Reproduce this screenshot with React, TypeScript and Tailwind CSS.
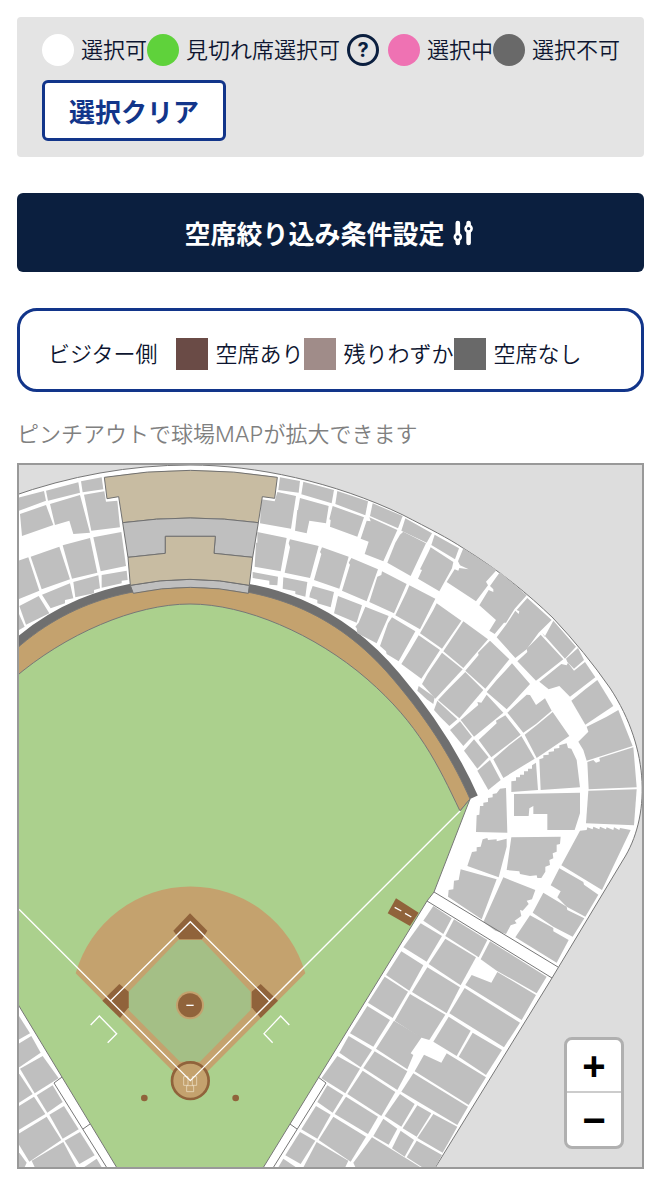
import React, { useState } from 'react';
import clsx from 'clsx';

interface LegendItem {
  label: string;
  color: string;
}

interface Section {
  id: string;
  transform: string;
  blocks: string[];
}

const SEAT_LEGEND: LegendItem[] = [
  { label: '選択可', color: 'bg-white' },
  { label: '見切れ席選択可', color: 'bg-[#5fd23b]' },
  { label: '選択中', color: 'bg-[#ef72b3]' },
  { label: '選択不可', color: 'bg-[#696969]' },
];

const AREA_LEGEND: LegendItem[] = [
  { label: '空席あり', color: 'bg-[#6a4b46]' },
  { label: '残りわずか', color: 'bg-[#a08c89]' },
  { label: '空席なし', color: 'bg-[#696969]' },
];

const INFIELD_BLOCKS = [
  '484,34 550,76 508,152 438,105',
  '434,110 504,155 458,234 384,188',
  '382,198 450,240 400,320 330,280',
  '462,242 545,292 512,340 520,345 502,388 408,326',
  '326,288 396,330 362,382 298,338',
  '404,334 502,394 472,450 370,384',
  '292,348 360,386 316,460 244,415',
  '368,392 466,456 424,528 322,462',
  '520,400 684,500 652,555 484,455',
  '262,436 310,466 278,518 232,486',
  '318,470 414,530 384,582 284,522',
  '480,462 524,492 484,560 434,528',
  '532,496 574,520 530,590 488,565',
  '580,522 652,560 608,638 532,594',
  '228,498 272,524 232,596 184,568',
  '280,530 378,590 332,665 236,600',
  '430,536 472,566 446,614 400,588',
  '482,572 522,600 494,650 456,625',
  '530,602 606,645 582,690 550,684 500,652',
  '180,576 226,602 182,672 136,646',
  '396,592 555,690 350,690 340,668',
  '230,606 325,662 312,690 186,690',
  '130,656 180,690 110,690',
];

// Block outlines are kept at three times the map scale
const SECTIONS: Section[] = [
  {
    id: 'left-field',
    transform: 'translate(10 460) scale(0.33333)',
    blocks: [
      '20,114 102,93 108,122 20,155',
      '108,92 205,67 210,98 114,122',
      '213,64 275,52 280,88 218,97',
      '30,162 108,135 130,195 36,228',
      '120,132 210,105 240,218 190,222 178,182 135,195',
      '222,104 283,94 288,125 322,122 330,202 244,212',
      '20,304 55,292 88,392 20,420',
      '62,290 148,260 180,358 95,388',
      '158,256 240,234 262,338 186,356',
      '250,232 334,216 348,318 272,334',
      '28,438 86,408 118,460 48,494',
      '96,404 180,370 190,415 165,420 165,430 122,445',
      '190,366 265,346 270,385 252,390 252,400 196,412',
      '275,345 350,332 353,360 335,362 335,370 275,383',
      '20,446 44,500 20,514',
    ],
  },
  {
    id: 'center-right',
    transform: 'translate(240 460) scale(0.33333)',
    blocks: [
      '120,52 180,63 176,98 115,90',
      '190,65 282,90 275,130 184,103',
      '292,93 384,124 376,166 286,132',
      '398,130 488,168 474,205 390,168',
      '496,175 576,220 560,248 484,212',
      '584,224 657,265 645,298 574,255',
      '112,96 168,108 153,206 60,190 64,118 104,124',
      '180,114 266,138 258,190 208,182 200,220 165,212 172,150 174,150',
      '278,138 372,172 352,230 270,200 272,180 268,178',
      '388,172 472,210 430,304 374,282 386,245 362,236 380,182 392,184',
      '490,215 558,250 512,348 442,308 466,248 480,224',
      '572,262 640,306 636,325 598,394 534,356 546,330 540,328 566,275',
      '52,216 140,234 122,334 44,320 48,248 52,248',
      '150,238 236,258 210,354 134,338 150,262 146,250',
      '246,262 326,290 298,386 222,360 244,282 240,276',
      '334,294 414,328 380,424 306,392 330,314 326,308',
      '426,334 500,372 462,460 388,426 412,350 424,345',
      '508,376 586,416 540,508 466,466 500,395',
      '38,336 114,350 112,376 88,374 88,362 38,354',
      '130,352 202,366 196,410 166,402 166,394 128,386',
      '218,378 282,396 272,442 232,430 232,420 208,412 210,400',
      '294,408 366,436 350,488 282,460',
      '376,440 446,468 410,550 352,520 350,505 346,500 356,488',
      '456,472 526,514 476,604 440,582 438,574 420,558 444,490',
    ],
  },
  {
    id: 'right-field',
    transform: 'translate(400 500) scale(0.33333)',
    blocks: [
      '190,145 290,210 258,245 264,256 228,304 140,246 164,208 175,212 178,204 206,208 180,196 174,184',
      '300,216 380,286 344,326 318,368 312,368 284,402 268,392 288,360 238,316 266,270 280,276 280,268 270,258',
      '382,294 455,360 416,398 380,448 346,474 290,412 320,372 346,332 356,342 358,334 350,330',
      '422,404 490,478 408,542 352,484 382,456 380,446',
      '460,362 528,440 495,476 426,398 434,410',
      '534,444 552,480 522,506 502,486 498,476',
      '522,512 555,486 586,532 510,590 478,558 446,568 418,545 484,492 500,496 504,488',
      '592,540 640,618 556,674 514,602 556,568',
      '110,310 184,362 126,446 60,400 100,330',
      '190,364 264,418 190,504 130,454 176,385',
      '270,422 328,478 256,566 196,512 236,465 234,458',
      '336,490 390,552 320,628 260,576 290,540 318,510',
      '56,406 120,450 64,536 4,492 30,450',
      '126,458 188,508 106,596 66,552 84,520',
      '56,558 104,592 100,612 80,598 52,572',
      '196,516 250,570 178,655 114,600 140,572',
    ],
  },
  {
    id: 'right-corner',
    transform: 'translate(400 680) scale(0.33333)',
    blocks: [
      '260,44 310,98 222,170 182,120 235,75 232,66 244,68',
      '316,106 362,164 326,192 274,232 236,180 290,130 288,122',
      '364,168 404,236 310,294 280,238 328,196',
      '380,44 390,45 408,75 435,55 455,92 408,132 370,158 322,98 352,70',
      '458,96 508,168 410,234 374,164 410,136',
      '112,62 172,118 148,138 120,110 102,90',
      '180,124 216,170 190,198 150,150',
      '222,178 266,232 232,266 192,212',
      '270,240 302,300 265,330 232,272',
      '655,90 698,198 560,242 550,210 535,185 565,155 560,140 620,110',
      '562,246 580,240 588,248 600,244 598,234 700,202 710,322 566,328',
      '565,332 710,328 702,436 558,430',
      '540,452 560,450 562,442 578,448 580,440 598,448 600,440 618,448 620,442 640,450 642,442 658,450 660,444 692,450 606,630 484,556',
      '334,304 348,302 348,292 360,292 360,284 372,284 372,274 384,274 384,266 396,266 396,256 408,248 414,330 334,336',
      '418,238 430,234 430,226 446,224 446,216 462,214 462,206 478,204 478,196 500,190 504,204 514,206 530,240 540,322 422,330',
      '342,342 540,338 540,400 524,450 442,450 442,402 400,402 400,378 388,385 386,408 342,408',
      '228,456 230,406 238,404 240,378 250,378 250,368 264,366 264,354 278,352 278,342 290,340 300,326 318,324 322,458',
      '248,478 262,474 264,480 290,478 290,484 320,476 320,500 296,592 202,558 216,516 230,514 230,502 242,500',
      '334,472 482,470 480,492 470,494 470,515 458,520 460,535 448,540 450,555 436,560 436,575 424,594 412,594 410,586 390,588 360,582 358,574 320,570',
    ],
  },
  {
    id: 'corner-lower',
    transform: 'translate(380 860) scale(0.33333)',
    blocks: [
      '242,28 350,58 305,178 204,110 206,90 220,88 222,62 236,60',
      '370,52 466,90 456,118 440,122 446,132 428,152 420,150 424,168 404,182 410,190 392,196 378,222 346,212 310,186',
      '538,25 610,66 612,74 655,104 616,170 560,140 532,112 542,94 512,76',
      '490,98 560,140 562,150 613,175 578,230 520,200 458,158',
      '450,166 520,204 520,214 566,240 530,308 406,232',
      '160,138 215,175 190,222 130,182',
      '222,178 322,240 296,292 196,228',
      '330,244 500,350 470,400 350,332 302,298',
      '122,190 186,228 140,305 70,262',
      '196,236 288,292 242,376 146,312',
      '352,336 468,405 425,480 256,375 275,345 334,368',
      '142,322 240,382 200,460 96,396',
      '254,384 420,488 372,562 208,460',
      '90,402 196,464 148,540 120,532 44,482',
      '206,470 272,512 230,588 160,545',
      '278,518 366,570 318,645 236,590',
      '200,580 318,652 266,735 104,634 132,584 184,608',
    ],
  },
  { id: 'infield-right', transform: 'translate(240 940) scale(0.33333)', blocks: INFIELD_BLOCKS },
  {
    id: 'infield-left',
    transform: 'translate(140 940) scale(-0.33333 0.33333)',
    blocks: INFIELD_BLOCKS,
  },
];

const STADIUM_OUTLINE =
  'M10 497 Q100 465 190 465 C255 465 335 482 403 515 C430 529 448 538 463 548 C500 571 528 594 553 618 Q585 652 610 688 C651 750 650 818 623 860 L552 978 L435 1168 L10 1168 Z';

const FENCE = 'M-13 679 C45 610 115 587 190 587 C265 587 335 610 393 679 C433 726 455 765 470 799';

const BASE_LINES = 'M27 148 L541 662 L1351 -148 M302 422 L541 185 L778 422';

const FilterIcon: React.FC = () => (
  <svg viewBox="0 0 20 26" className="h-[26px] w-5" fill="none" stroke="currentColor" aria-hidden="true">
    <path d="M4.8 3v20M15.6 3v20" strokeWidth="4.6" strokeLinecap="round" />
    <circle cx="4.8" cy="17" r="3" strokeWidth="2.6" fill="#0b1f3f" />
    <circle cx="15.6" cy="8.6" r="3" strokeWidth="2.6" fill="#0b1f3f" />
  </svg>
);

const Infield: React.FC = () => (
  <g transform="translate(10 860) scale(0.33333)">
    <path d="M197 340 A358 358 0 0 1 886 340 L541 686 Z" fill="#c4a26e" />
    <path d="M505 240H576L722 395V450L570 605H510L356 450V395Z" fill="#a4bf86" />
    <g fill="#90633b">
      <path d="M540 160L592 212L576 238H508L490 212Z" />
      <path d="M328 372L356 395V442L330 474L277 422Z" />
      <path d="M752 372L725 395V442L752 474L804 422Z" />
      <circle cx="403" cy="714" r="10" />
      <circle cx="677" cy="714" r="10" />
    </g>
    <circle cx="540" cy="436" r="42" fill="#c4a26e" />
    <circle cx="540" cy="436" r="36" fill="#90633b" />
    <circle cx="541" cy="662" r="55" fill="#c4a26e" stroke="#90633b" strokeWidth="8" />
    <path
      d="M521 650h13v26h-13zM547 650h13v26h-13zM530 677h21v18h-21z"
      fill="none"
      stroke="#f1e6cf"
      strokeWidth="2"
    />
    <g fill="none" stroke="#fff" strokeWidth="4">
      <path d="M529 436H551" />
      <path d={BASE_LINES} />
      <path d="M242 495L268 468L320 521L293 548M838 495L812 468L762 521L788 548" />
    </g>
  </g>
);

const StadiumMap: React.FC = () => (
  <svg viewBox="19 465 623 702" className="block h-auto w-full" role="img" aria-label="球場MAP">
    <defs>
      <clipPath id="field">
        <path d="M10 673 L0 1168 L263 1168 L427 901 L434 892 L470 799 L460 811 C438 765 419 724 367 679 C315 634 245 604 190 604 C135 604 65 634 13 679 Z" />
      </clipPath>
    </defs>
    <path d={STADIUM_OUTLINE} fill="#fff" stroke="#777" strokeWidth="1" />

    {/* Fence, warning track and grass */}
    <path d={FENCE} fill="none" stroke="#6f6f6f" strokeWidth="17" />
    <path d={`${FENCE} L460 811 L190 1000 Z`} fill="#c4a26e" stroke="#777" strokeWidth="1" />
    <path
      d="M13 679 C65 634 135 604 190 604 C245 604 315 634 367 679 C419 724 438 765 460 811 L470 799 L434 892 L427 901 L263 1168 L117 1168 L19 1006 L10 990 Z"
      fill="#abd08d"
      stroke="#777"
      strokeWidth="1"
    />

    {SECTIONS.map(section => (
      <g key={section.id} transform={section.transform} fill="#bfbfbf">
        {section.blocks.map(points => (
          <polygon key={points} points={points} />
        ))}
      </g>
    ))}

    {/* Backscreen */}
    <g transform="translate(10 460) scale(0.33333)" stroke="#707070" strokeWidth="3">
      <path d="M361 376Q540 340 718 376L715 400Q540 364 370 400Z" fill="#bfbfbf" />
      <path d="M283 52Q540 10 802 52L794 115L757 110L745 188Q540 160 338 188L326 110L291 116Z" fill="#c8bca2" />
      <path d="M338 188Q540 160 745 188L728 292L612 280L616 229H466V280L354 292Z" fill="#bfbfbf" />
      <path d="M354 292L466 280V229H616L612 280L728 292L718 376Q540 340 361 376Z" fill="#c8bca2" />
    </g>

    <g clipPath="url(#field)">
      <Infield />
    </g>

    {/* Bullpen */}
    <g transform="translate(380 860) scale(0.33333)">
      <path d="M48 115L116 158L90 198L23 160Z" fill="#90633b" />
      <path d="M44 142L64 153M75 160L94 171" stroke="#fff" strokeWidth="4" />
    </g>

    {/* Aisles along the stands */}
    <g fill="none" stroke="#777" strokeWidth="1">
      <path d="M434 892L558 967M427 901L552 978" />
      <path d="M318 1077L326 1083L273 1168M290 1124L297 1129" />
      <path d="M62 1077L54 1083L107 1168M90 1124L83 1129" />
    </g>
  </svg>
);

const App: React.FC = () => {
  const [zoom, setZoom] = useState(1);

  return (
    <main className="min-h-screen bg-white px-[17px] pt-[17px] pb-8 font-['Noto_Sans_CJK_JP',sans-serif] text-[22px] leading-8 font-[350] text-[#0d1530]">
      <section className="rounded-sm bg-[#e4e4e4] pt-[17px] pr-4 pb-4 pl-[25px]">
        <ul className="flex flex-wrap">
          {SEAT_LEGEND.map((item, index) => (
            <li key={item.label} className="flex h-8 items-center gap-[7px]">
              <span className={clsx('size-8 shrink-0 rounded-full', item.color)} />
              <span className="pb-1 whitespace-nowrap">{item.label}</span>
              {index === 1 && (
                <button
                  type="button"
                  aria-label="見切れ席について"
                  className="mr-[9px] flex size-8 items-center justify-center rounded-full border-[3px] border-[#0b1f3f] font-['Inter',sans-serif] text-xl leading-6 font-bold text-[#0b1f3f]"
                >
                  ?
                </button>
              )}
            </li>
          ))}
        </ul>
        <button
          type="button"
          onClick={() => setZoom(1)}
          className="mt-3.5 h-[61px] rounded-md border-[3px] border-[#12358a] bg-white px-6 text-[26px] font-bold text-[#12358a]"
        >
          選択クリア
        </button>
      </section>

      <button
        type="button"
        className="mt-9 flex h-[79px] w-full items-center justify-center gap-2 rounded-md bg-[#0b1f3f] pr-1 text-[26px] font-bold text-white"
      >
        空席絞り込み条件設定
        <FilterIcon />
      </button>

      <section className="mt-9 flex min-h-[84px] flex-wrap items-center rounded-[20px] border-[3px] border-[#12358a] px-7 pt-2">
        <h2 className="mr-[18px] pb-1">ビジター側</h2>
        <ul className="flex flex-wrap">
          {AREA_LEGEND.map(item => (
            <li key={item.label} className="flex h-8 items-center gap-2">
              <span className={clsx('size-8 shrink-0', item.color)} />
              <span className="pb-1 whitespace-nowrap">{item.label}</span>
            </li>
          ))}
        </ul>
      </section>

      <p className="mt-[26px] font-['Inter','Noto_Sans_CJK_JP',sans-serif] text-[#808080]">
        ピンチアウトで球場MAPが拡大できます
      </p>

      <section className="relative mt-[13px] overflow-hidden border-2 border-[#999] bg-[#ddd]">
        <div className="origin-center" style={{ transform: `scale(${zoom})` }}>
          <StadiumMap />
        </div>
        <div className="absolute right-[18px] bottom-[18px] flex w-[60px] flex-col overflow-hidden rounded-lg border-[3px] border-[#b0b0b0] bg-white font-['Liberation_Sans',sans-serif] text-[40px] font-bold text-black">
          <button
            type="button"
            aria-label="拡大"
            onClick={() => setZoom(Math.min(zoom + 0.5, 4))}
            className="h-[53px] border-b-2 border-[#ccc]"
          >
            +
          </button>
          <button
            type="button"
            aria-label="縮小"
            onClick={() => setZoom(Math.max(zoom - 0.5, 1))}
            className="h-[53px]"
          >
            −
          </button>
        </div>
      </section>
    </main>
  );
};

export default App;
